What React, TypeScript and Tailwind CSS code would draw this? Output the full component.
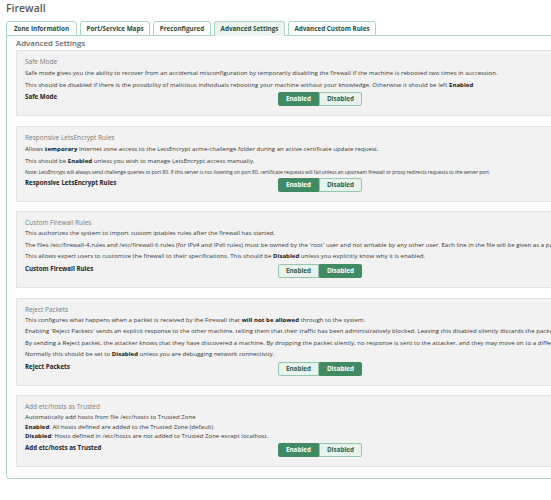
import type { ReactNode } from "react";

const TABS = [
  { label: "Zone Information", w: "w-[71px]" },
  { label: "Port/Service Maps", w: "w-[70px]" },
  { label: "Preconfigured", w: "w-[58px]" },
  { label: "Advanced Settings", w: "w-[71px]", active: true },
  { label: "Advanced Custom Rules", w: "w-[88px]" },
];

function Toggle({ enabled }: { enabled: boolean }) {
  const on = "bg-[#408b63] text-white border-[#408b63]";
  const off = "bg-[#e9f3ee] text-[#2c5e48] border-[#94c6ab]";
  return (
    <div className="mt-[1px] flex h-[14px] text-[6.3px] font-bold leading-[12px]">
      <div className={`flex w-[41px] items-center justify-center rounded-l-[2px] border ${enabled ? on : off}`}>
        Enabled
      </div>
      <div className={`flex w-[43px] items-center justify-center rounded-r-[2px] border ${enabled ? off : on}`}>
        Disabled
      </div>
    </div>
  );
}

function B({ children }: { children: ReactNode }) {
  return <span className="font-bold text-[#111]">{children}</span>;
}

function Panel({
  title,
  children,
  enabled,
}: {
  title: string;
  children: ReactNode;
  enabled: boolean;
}) {
  return (
    <div className="border border-[#e3e3e3] bg-[#f2f2f2] px-[8px] pt-[5px] pb-[9px]">
      <div className="text-[6.5px] leading-[11px] text-[#7a7a7a]">{title}</div>
      <div className="text-[6px] leading-[12px] tracking-[0.05px] text-[#333] whitespace-nowrap">{children}</div>
      <div className="flex items-start">
        <div className="w-[253px] text-[6.2px] font-bold leading-[12px] text-[#222]">{title}</div>
        <Toggle enabled={enabled} />
      </div>
    </div>
  );
}

export default function App() {
  return (
    <div className="h-[500px] w-[551px] overflow-hidden bg-white font-['Open_Sans',sans-serif]">
      <div className="ml-[6px] w-[760px]">
        <h1 className="h-[15px] pt-[1px] text-[10.5px] font-semibold leading-[15px] text-[#575757]">Firewall</h1>

        {/* tabs */}
        <div className="mt-[7px] flex h-[14px] items-end gap-[3px] border-b border-[#a9d6c0]">
          {TABS.map((t) => (
            <div
              key={t.label}
              className={`${t.w} -mb-[1px] flex h-[15px] items-center justify-center rounded-t-[3px] border border-[#a9d6c0] text-[6.3px] font-bold text-[#1f4d3c] ${
                t.active ? "border-b-[#eef5f1] bg-[#eef5f1]" : "bg-white"
              }`}
            >
              {t.label}
            </div>
          ))}
        </div>

        <div className="rounded-b-[4px] border border-t-0 border-[#a9d6c0] pr-[9px] pb-[11px] pl-[9px]">
          <div className="h-[14px] text-[7.8px] font-semibold leading-[14px] text-[#666]">Advanced Settings</div>

          <div className="flex flex-col gap-[9.5px]">
            <Panel title="Safe Mode" enabled>
              <p>
                Safe mode gives you the ability to recover from an accidental misconfiguration by temporarily disabling the
                firewall if the machine is rebooted two times in succession.
              </p>
              <p>
                This should be disabled if there is the possibility of malicious individuals rebooting your machine without
                your knowledge. Otherwise it should be left <B>Enabled</B>
              </p>
            </Panel>

            <Panel title="Responsive LetsEncrypt Rules" enabled>
              <p>
                Allows <B>temporary</B> Internet zone access to the LetsEncrypt acme-challenge folder during an active
                certificate update request.
              </p>
              <p>
                This should be <B>Enabled</B> unless you wish to manage LetsEncrypt access manually.
              </p>
              <p className="text-[5px] leading-[10px] tracking-[-0.05px]">
                Note: LetsEncrypt will always send challenge queries to port 80. If this server is not listening on port 80,
                certificate requests will fail unless an upstream firewall or proxy redirects requests to the server port.
              </p>
            </Panel>

            <Panel title="Custom Firewall Rules" enabled={false}>
              <div className="leading-[11.7px]">
                <p>This authorizes the system to import custom iptables rules after the firewall has started.</p>
                <p>
                  The files /etc/firewall-4.rules and /etc/firewall-6.rules (for IPv4 and IPv6 rules) must be owned by the
                  'root' user and not writable by any other user. Each line in the file will be given as a parameter to
                  iptables.
                </p>
                <p>
                  This allows expert users to customize the firewall to their specifications. This should be{" "}
                  <B>Disabled</B> unless you explicitly know why it is enabled.
                </p>
              </div>
            </Panel>

            <Panel title="Reject Packets" enabled={false}>
              <div className="leading-[11.5px]">
                <p>
                  This configures what happens when a packet is received by the Firewall that <B>will not be allowed</B>{" "}
                  through to the system.
                </p>
                <p>
                  Enabling 'Reject Packets' sends an explicit response to the other machine, telling them that their traffic
                  has been administratively blocked. Leaving this disabled silently discards the packets.
                </p>
                <p>
                  By sending a Reject packet, the attacker knows that they have discovered a machine. By dropping the packet
                  silently, no response is sent to the attacker, and they may move on to a different target.
                </p>
                <p>
                  Normally this should be set to <B>Disabled</B> unless you are debugging network connectivity.
                </p>
              </div>
            </Panel>

            <Panel title="Add etc/hosts as Trusted" enabled>
              <div className="mt-[1px] leading-[9.5px]">
                Automatically add hosts from file /etc/hosts to Trusted Zone
                <br />
                <B>Enabled</B>: All hosts defined are added to the Trusted Zone (default)
                <br />
                <B>Disabled</B>: Hosts defined in /etc/hosts are not added to Trusted Zone except localhost.
              </div>
            </Panel>
          </div>
        </div>
      </div>
    </div>
  );
}
